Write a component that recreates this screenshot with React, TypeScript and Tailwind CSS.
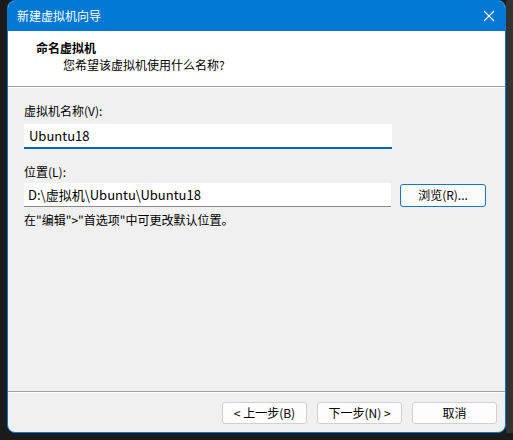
const font = "font-['Noto_Sans_CJK_SC','Noto_Sans',sans-serif]";

function WizardButton({ label, focused }: { label: string; focused?: boolean }) {
  return (
    <button
      className={
        "flex h-[22px] w-[85px] items-center justify-center rounded-[3px] border bg-[#fdfdfd] text-[12px] leading-none text-black " +
        (focused ? "border-[#0067c0]" : "border-[#d0d0d0]")
      }
    >
      {label}
    </button>
  );
}

export default function App() {
  return (
    <div className={`flex h-[440px] w-[513px] items-start bg-[#1b1b1b] ${font}`}>
      <div className="w-[7px] shrink-0" />
      <div className="flex h-[433px] w-[499px] shrink-0 flex-col overflow-hidden rounded-[8px] border border-[#0078d4] bg-[#f0f0f0]">
        {/* title bar */}
        <div className="flex h-[30px] shrink-0 items-center justify-between bg-[#0078d4] pl-[9px] pr-[9px] text-white">
          <span className="text-[12px] leading-none">新建虚拟机向导</span>
          <svg width="12" height="12" viewBox="0 0 12 12" className="mr-[1px]">
            <path d="M1 1L11 11M11 1L1 11" stroke="white" strokeWidth="1.1" />
          </svg>
        </div>

        {/* header */}
        <div className="flex h-[56px] shrink-0 flex-col border-b border-[#a0a0a0] bg-white pl-[28px] pt-[9px]">
          <div className="text-[12px] font-bold leading-[15px] text-black">命名虚拟机</div>
          <div className="mt-[2px] pl-[27px] text-[12px] leading-[15px] text-black">
            您希望该虚拟机使用什么名称?
          </div>
        </div>
        <div className="h-px shrink-0 bg-white" />

        {/* body */}
        <div className="flex flex-1 flex-col pl-[16px] pt-[15px] text-[12px] text-black">
          <div className="leading-[15px]">虚拟机名称(V):</div>
          <div className="mt-[6px] flex h-[25px] w-[368px] items-center border-b-2 border-[#0067c0] bg-white pl-[5px] text-[13px]">
            Ubuntu18
          </div>

          <div className="mt-[15px] leading-[15px]">位置(L):</div>
          <div className="mt-[4px] flex items-center">
            <div className="flex h-[24px] w-[367px] items-center border-b border-[#8a8a8a] bg-white pl-[4px] text-[13px]">
              D:\虚拟机\Ubuntu\Ubuntu18
            </div>
            <div className="ml-[9px]">
              <button className="flex h-[23px] w-[86px] items-center justify-center rounded-[3px] border border-[#1a73c9] bg-[#fbfbfb] text-[12px] leading-none">
                浏览(R)...
              </button>
            </div>
          </div>
          <div className="mt-[5px] leading-[15px]">在"编辑"&gt;"首选项"中可更改默认位置。</div>
        </div>

        {/* footer */}
        <div className="h-px shrink-0 bg-[#a0a0a0]" />
        <div className="h-px shrink-0 bg-white" />
        <div className="flex h-[39px] shrink-0 items-start gap-[10px] pl-[214px] pt-[9px]">
          <WizardButton label="< 上一步(B)" />
          <WizardButton label="下一步(N) >" />
          <WizardButton label="取消" />
        </div>
      </div>
      <div className="h-[433px] flex-1 bg-[#333333]" />
    </div>
  );
}
